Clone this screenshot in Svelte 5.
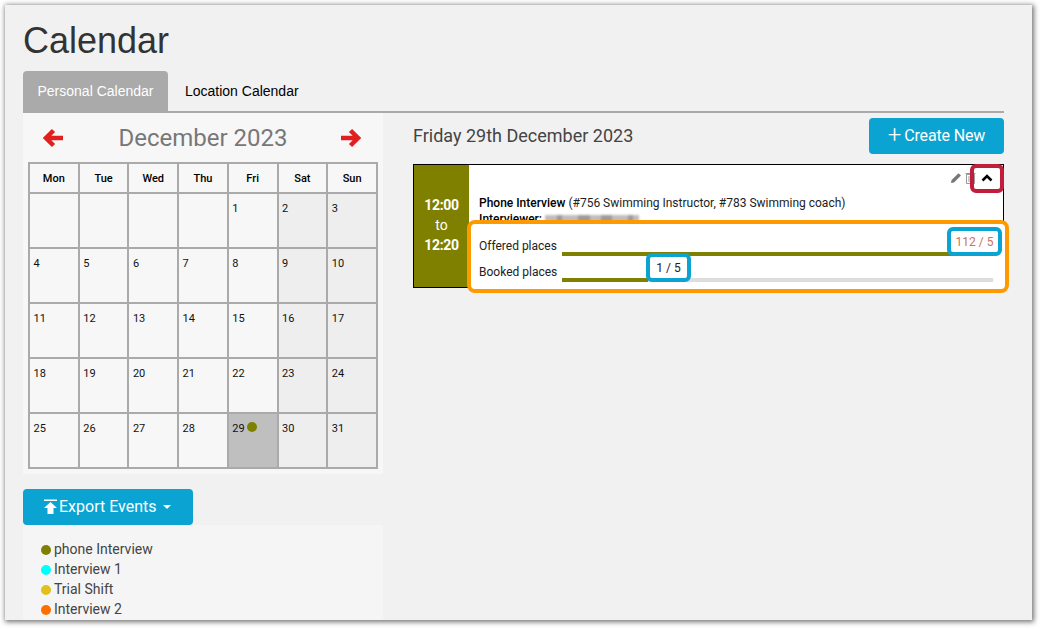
<script>
  const days = ["Mon", "Tue", "Wed", "Thu", "Fri", "Sat", "Sun"];
  // December 2023 starts on a Friday
  const cells = [...Array(4).fill(null), ...Array.from({ length: 31 }, (_, i) => i + 1)];
  const weeks = [];
  for (let i = 0; i < cells.length; i += 7) weeks.push(cells.slice(i, i + 7));

  const legend = [
    { name: "phone Interview", color: "#808000" },
    { name: "Interview 1", color: "#00ffff" },
    { name: "Trial Shift", color: "#e0c01c" },
    { name: "Interview 2", color: "#ff6f00" }
  ];
  const blur = [12, 5, 10, 6, 12, 7, 4, 11, 6, 10, 5, 6];
</script>

<div class="frame">
  <h1>Calendar</h1>
  <div class="tabs">
    <div class="tab active">Personal Calendar</div>
    <div class="tab">Location Calendar</div>
  </div>

  <div class="columns">
    <div class="left">
      <div class="cal-panel">
        <div class="cal-head">
          <svg class="arrow" viewBox="0 0 20 20">
            <path d="M10.5 2.5 L3 10 L10.5 17.5 M3.5 10 H20" />
          </svg>
          <span>December 2023</span>
          <svg class="arrow" viewBox="0 0 20 20">
            <path d="M9.5 2.5 L17 10 L9.5 17.5 M16.5 10 H0" />
          </svg>
        </div>
        <table>
          <thead>
            <tr>{#each days as d}<th>{d}</th>{/each}</tr>
          </thead>
          <tbody>
            {#each weeks as week}
              <tr>
                {#each week as day, i}
                  <td class:weekend={i > 4 && day} class:today={day === 29}>
                    {#if day}{day}{/if}
                    {#if day === 29}<i class="dot"></i>{/if}
                  </td>
                {/each}
              </tr>
            {/each}
          </tbody>
        </table>
      </div>

      <button class="btn export">
        <svg width="16" height="16" viewBox="0 0 16 16">
          <path d="M1 1.5 H14 V3 H1 Z M7.5 4 L14 10 H10.5 V16 H4.5 V10 H1 Z" fill="#fff" />
        </svg>
        Export Events
        <i class="caret"></i>
      </button>

      <div class="legend">
        {#each legend as item}
          <div class="legend-row"><i style="background: {item.color}"></i>{item.name}</div>
        {/each}
      </div>
    </div>

    <div class="right">
      <div class="right-head">
        <h2>Friday 29th December 2023</h2>
        <button class="btn create"><span class="plus">+</span>Create New</button>
      </div>

      <div class="card">
        <div class="time">
          <b>12:00</b>
          <span>to</span>
          <b>12:20</b>
        </div>
        <div class="card-body">
          <div class="actions">
            <svg width="12" height="12" viewBox="0 0 12 12">
              <path d="M1 11 L1.6 8 L8.5 1.2 L11 3.6 L4 10.4 Z" fill="#777" />
            </svg>
            <svg width="11" height="12" viewBox="0 0 11 12">
              <path d="M1.5 2.5 H9.5 V11.5 H1.5 Z M0.5 1.5 H10.5 M4 4 V10 M7 4 V10" fill="none" stroke="#999" />
            </svg>
            <svg class="chevron" width="12" height="8" viewBox="0 0 12 8">
              <path d="M1.5 6.5 L6 2 L10.5 6.5" fill="none" stroke="#000" stroke-width="2.6" />
            </svg>
          </div>
          <p><b>Phone Interview</b> (#756 Swimming Instructor, #783 Swimming coach)</p>
          <p class="interviewer">
            <b>Interviewer:</b>
            <span class="blurred">
              {#each blur as w, i}<i style="width: {w}px; opacity: {i % 3 === 1 ? 1 : 0.65}"></i>{/each}
            </span>
          </p>
        </div>

        <div class="mark orange">
          <div class="place">
            <span>Offered places</span>
            <div class="track"><div class="fill" style="width: 100%"></div></div>
          </div>
          <div class="place">
            <span>Booked places</span>
            <div class="track"><div class="fill" style="width: 20%"></div></div>
          </div>
        </div>
        <div class="mark blue offered">112 / 5</div>
        <div class="mark blue booked">1 / 5</div>
        <div class="mark red"></div>
      </div>
    </div>
  </div>
</div>

<style>
  :global(body) {
    margin: 0;
    min-height: 629px;
    background: #fff;
  }

  .frame {
    box-sizing: border-box;
    width: 1027px;
    height: 615px;
    margin: 5px 0 0 5px;
    padding: 0 28px 0 18px;
    overflow: hidden;
    background: #f1f1f1;
    box-shadow: 1px 1px 5px 1px rgba(0, 0, 0, 0.55);
    font-family: Roboto, sans-serif;
    color: #333;
  }

  h1 {
    margin: 0;
    padding-top: 15px;
    height: 51px;
    font: 400 36px/41px "Liberation Sans", sans-serif;
  }

  .tabs {
    display: flex;
    height: 40px;
    border-bottom: 2px solid #aaa;
  }
  .tab {
    padding: 0 17px;
    font: 14px/40px "Liberation Sans", sans-serif;
    color: #000;
  }
  .tab.active {
    padding: 0 14.5px;
    background: #aaa;
    color: #fff;
    border-radius: 4px 4px 0 0;
  }

  .columns {
    display: flex;
    gap: 30px;
  }
  .left {
    flex: none;
    width: 360px;
  }
  .right {
    flex: 1;
  }

  .cal-panel {
    box-sizing: border-box;
    height: 361px;
    padding: 0 5px;
    background: #f7f7f7;
  }
  .cal-head {
    display: flex;
    justify-content: space-between;
    align-items: center;
    height: 49px;
    padding: 1px 17px 0 15px;
    box-sizing: border-box;
    font-size: 24px;
    color: #777;
  }
  .cal-head span {
    margin-left: 2px;
  }
  .arrow {
    width: 20px;
    height: 20px;
  }
  .arrow path {
    fill: none;
    stroke: #e21f1f;
    stroke-width: 4.5;
  }

  table {
    width: 350px;
    table-layout: fixed;
    border-collapse: collapse;
    border: 2px solid #aaa;
    font-size: 11px;
    color: #111;
  }
  th,
  td {
    border: 2px solid #aaa;
    padding: 0;
  }
  th {
    height: 28px;
    font-weight: 500;
    color: #000;
    text-align: center;
  }
  td {
    padding: 8px 0 0 3.5px;
    box-sizing: content-box;
    height: 45px;
    vertical-align: top;
    line-height: 14px;
  }
  td.weekend {
    background: #eee;
  }
  td.today {
    background: #bfbfbf;
  }
  .dot {
    display: inline-block;
    width: 10px;
    height: 10px;
    margin-top: -4px;
    border-radius: 50%;
    background: #808000;
  }

  .btn {
    display: flex;
    align-items: center;
    border: none;
    background: #0ba3d1;
    color: #fff;
    border-radius: 4px;
    font-family: Roboto, sans-serif;
    font-size: 16px;
    height: 36px;
  }
  .export {
    width: 170px;
    margin-top: 15px;
    padding: 0 0 2px 20px;
    gap: 0;
  }
  .caret {
    margin: 2px 0 0 6px;
    border: 4px solid transparent;
    border-top-color: #fff;
    border-bottom: 0;
  }

  .legend {
    height: 110px;
    padding: 14px 18px;
    background: #f5f5f5;
    box-sizing: border-box;
    font-size: 14px;
    color: #444;
  }
  .legend-row {
    display: flex;
    align-items: center;
    height: 20px;
  }
  .legend-row i {
    width: 10px;
    height: 10px;
    margin: 2px 3px 0 0;
    border-radius: 50%;
  }

  .right-head {
    display: flex;
    justify-content: space-between;
    align-items: center;
    margin-top: 5px;
    height: 36px;
  }
  h2 {
    margin: 0 0 2px;
    font-size: 18px;
    font-weight: 400;
    color: #444;
  }
  .create {
    justify-content: center;
    width: 135px;
    padding: 0 0 2px;
    letter-spacing: -0.01em;
  }
  .plus {
    font-size: 24px;
    font-weight: 300;
    line-height: 20px;
    margin-right: 3px;
  }

  .card {
    position: relative;
    display: flex;
    box-sizing: border-box;
    height: 124px;
    margin-top: 10px;
    background: #fff;
    border: 1px solid #000;
    font-size: 12px;
    color: #222;
  }
  .time {
    flex: none;
    width: 55px;
    box-sizing: border-box;
    padding-bottom: 2px;
    display: flex;
    flex-direction: column;
    align-items: center;
    justify-content: center;
    background: #808000;
    color: #fff;
    font-size: 14px;
    line-height: 20px;
  }
  .time b {
    font-weight: 700;
    letter-spacing: -0.02em;
  }
  .card-body {
    flex: 1;
    padding: 0 10px;
  }
  .actions {
    display: flex;
    justify-content: flex-end;
    align-items: center;
    gap: 3px;
    height: 26px;
  }
  .chevron {
    margin-left: 2px;
  }
  p {
    margin: 0;
    line-height: 16px;
  }
  p:first-of-type {
    margin-top: 4px;
  }
  p b {
    font-weight: 500;
    color: #000;
  }
  .blurred {
    display: inline-flex;
    vertical-align: middle;
    height: 10px;
    filter: blur(0.8px);
  }
  .blurred i {
    background: #a09a9a;
  }

  .mark {
    position: absolute;
    box-sizing: border-box;
  }
  .orange {
    left: 53px;
    top: 55px;
    width: 542px;
    height: 73px;
    padding: 6px 12px 0 8px;
    background: #fff;
    border: 4px solid #ff9900;
    border-radius: 8px;
  }
  .place {
    display: flex;
    align-items: flex-end;
    height: 26px;
  }
  .place span {
    width: 83px;
    flex: none;
    line-height: 14px;
    padding-bottom: 3px;
  }
  .track {
    flex: 1;
    height: 4px;
    background: #ddd;
  }
  .fill {
    height: 100%;
    background: #808000;
  }
  .blue {
    display: flex;
    align-items: center;
    justify-content: center;
    height: 29px;
    background: #fff;
    border: 4px solid #0ba3d1;
    border-radius: 6px;
  }
  .offered {
    left: 533px;
    top: 62px;
    width: 55px;
    color: #c8745a;
  }
  .booked {
    left: 232px;
    top: 88px;
    width: 45px;
  }
  .red {
    left: 556px;
    top: -1px;
    width: 34px;
    height: 29px;
    border: 4px solid #c01e3c;
    border-radius: 6px;
  }
</style>
